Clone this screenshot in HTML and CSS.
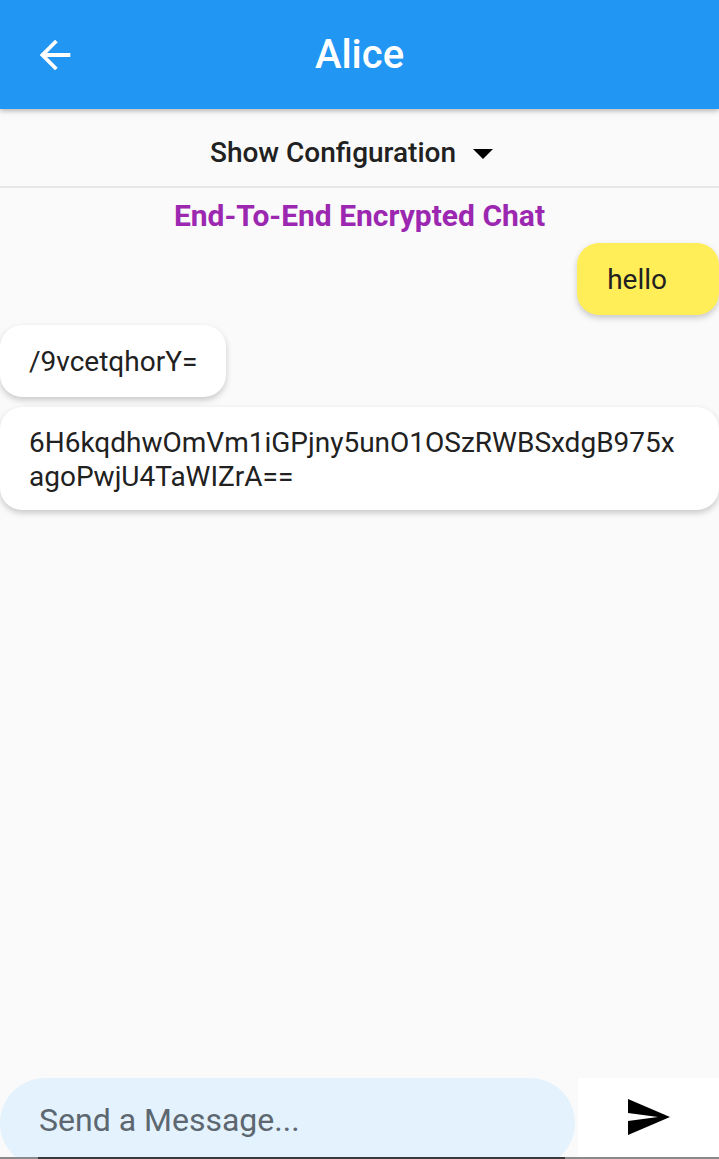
FILE: index.html
```html
<!DOCTYPE html>
<html lang="en">
<head>
<meta charset="utf-8">
<title>Alice</title>
<link rel="stylesheet" href="styles.css">
</head>
<body>
<div class="screen">
  <header class="appbar">
    <div class="appbar-lead">
      <svg class="icon-back" viewBox="0 0 24 24" aria-hidden="true"><path d="M20 11H7.83l5.59-5.59L12 4l-8 8 8 8 1.41-1.41L7.83 13H20v-2z" fill="#fff"/></svg>
    </div>
    <h1 class="appbar-title">Alice</h1>
    <div class="appbar-trail"></div>
  </header>

  <div class="config">
    <span class="config-label">Show Configuration</span>
    <svg class="icon-caret" viewBox="0 0 20 10" aria-hidden="true"><path d="M0 0h20L10 10z" fill="#000"/></svg>
  </div>

  <div class="e2e">End-To-End Encrypted Chat</div>

  <main class="messages">
    <div class="bubble bubble-out">hello</div>
    <div class="bubble bubble-in">/9vcetqhorY=</div>
    <div class="bubble bubble-in bubble-wide">6H6kqdhwOmVm1iGPjny5unO1OSzRWBSxdgB975x<br>agoPwjU4TaWIZrA==</div>
  </main>

  <footer class="composer">
    <div class="input">Send a Message...</div>
    <div class="send">
      <svg class="icon-send" viewBox="0 0 24 24" aria-hidden="true"><path d="M2.01 21L23 12 2.01 3 2 10l15 2-15 2z" fill="#000"/></svg>
    </div>
  </footer>
  <div class="navline"><div class="navline-dark"></div></div>
</div>
</body>
</html>
```

FILE: styles.css
```css
* { box-sizing: border-box; }
html, body { margin: 0; padding: 0; }
body {
  background: #fafafa;
  font-family: Roboto, "Noto Sans", "Liberation Sans", sans-serif;
  color: #212121;
}
.screen {
  height: 1159px;
  display: flex;
  flex-direction: column;
  overflow: hidden;
}
.appbar {
  flex: 0 0 109px;
  background: #2196f3;
  display: grid;
  grid-template-columns: 1fr auto 1fr;
  align-items: center;
  box-shadow: 0 2px 5px rgba(0,0,0,0.28);
  position: relative;
  z-index: 2;
}
.appbar-lead { padding-left: 32px; display: flex; align-items: center; }
.icon-back { width: 46px; height: 46px; display: block; }
.appbar-title {
  margin: 0;
  color: #fff;
  font-size: 40px;
  font-weight: 500;
  line-height: 1;
}
.config {
  flex: 0 0 79px;
  display: flex;
  align-items: center;
  justify-content: center;
  gap: 17px;
  border-bottom: 2px solid #e8e8e8;
  padding: 10px 16px 0 0;
}
.config-label {
  font-size: 28px;
  font-weight: 500;
  color: #212121;
}
.icon-caret { width: 20px; height: 10px; display: block; margin-top: 2px; }
.e2e {
  text-align: center;
  color: #9c27b0;
  font-size: 30px;
  font-weight: 700;
  padding-top: 10px;
  height: 55px;
}
.messages {
  flex: 1;
  display: flex;
  flex-direction: column;
  align-items: flex-start;
  gap: 10px;
}
.bubble {
  background: #fff;
  font-size: 28px;
  line-height: 34px;
  color: #212121;
  padding: 20px 29px 18px;
  border-radius: 22px;
  box-shadow: 0 3px 6px rgba(0,0,0,0.2);
}
.bubble-out {
  align-self: flex-end;
  background: #ffee58;
  padding: 20px 52px 18px 30px;
}
.bubble-wide { align-self: stretch; padding-top: 19px; padding-bottom: 16px; }
.composer {
  flex: 0 0 79px;
  display: flex;
  align-items: flex-start;
  overflow: hidden;
}
.input {
  flex: 0 0 575px;
  height: 90px;
  background: #e3f2fd;
  border-radius: 45px;
  font-size: 32px;
  color: #5c6770;
  padding: 23px 0 0 39px;
}
.send {
  flex: 1;
  margin-left: 3px;
  height: 79px;
  background: #fff;
  display: flex;
  align-items: flex-start;
  padding: 15px 0 0 46px;
}
.icon-send { width: 48px; height: 48px; display: block; }
.navline {
  flex: 0 0 2px;
  background: #8a8a8a;
  padding-left: 38px;
}
.navline-dark { width: 527px; height: 2px; background: #3a3a3a; }
```
